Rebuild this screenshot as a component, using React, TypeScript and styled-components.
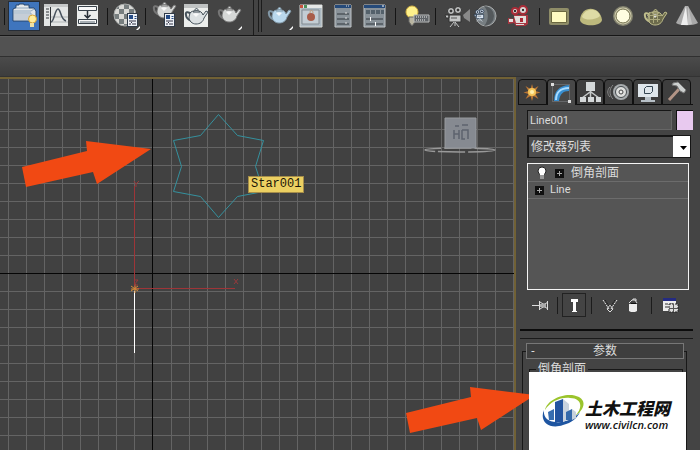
import React from "react";
import styled, { createGlobalStyle } from "styled-components";

const GlobalStyle = createGlobalStyle`
  * { box-sizing: border-box; }
  body { margin: 0; background: #444; }
  button, input, select { font: inherit; color: inherit; margin: 0; padding: 0; border-radius: 0; }
`;

const Page = styled.main`
  display: flex;
  flex-direction: column;
  height: 100vh;
  overflow: hidden;
  background: #444;
  color: #dcdcdc;
  font: 11px/16px Roboto, "Noto Sans CJK SC", sans-serif;
`;

const Toolbar = styled.header`
  display: flex;
  flex: none;
  height: 36px;
  overflow: hidden;
  background: #444;
  border-bottom: 1px solid #161616;
`;

const ToolButton = styled.button`
  flex: none;
  width: 32px;
  height: 35px;
  border: 0;
  background: none;
  svg { display: block; }
`;

const Separator = styled.span<{ $width: number }>`
  display: flex;
  flex: none;
  justify-content: center;
  width: ${(p) => p.$width}px;
  padding: 8px 0 10px;
  &::before { content: ""; width: 1px; background: #151515; }
`;

const Grip = styled.span`
  display: flex;
  flex: none;
  gap: 2px;
  width: 19px;
  padding-left: 9px;
  i { width: 1px; height: 32px; background: #1c1c1c; }
  i:first-child { height: 35px; margin-right: 2px; }
`;

const Ribbon = styled.div`
  flex: none;
  height: 21px;
  background: #525252;
  border-top: 1px solid #5c5c5c;
  border-bottom: 1px solid #303030;
`;

const RibbonFooter = styled.div`
  flex: none;
  height: 20px;
  background: linear-gradient(#4b4b4b, #3d3d3d);
  border-bottom: 1px solid #333;
`;

const Workspace = styled.div`
  position: relative;
  display: flex;
  flex: 1;
  min-height: 0;
`;

const Viewport = styled.section`
  position: relative;
  flex: 1;
  min-width: 0;
  border: solid #716135;
  border-width: 2px 2px 0 0;
  background: #414141;
`;

const Scene = styled.svg`
  display: block;
  width: 100%;
  height: 100%;
`;

const ViewCube = styled.svg`
  position: absolute;
  top: 36px;
  right: 16px;
`;

const ObjectTip = styled.span`
  position: absolute;
  top: 97px;
  left: 248px;
  padding: 0 2px;
  border: 1px solid #a58d4a;
  background: #ecd062;
  color: #1c1608;
  font: 12px/15px "Liberation Mono", monospace;
`;

const Arrow = styled.svg<{ $top: number; $left?: number; $right?: number }>`
  position: absolute;
  z-index: 1;
  top: ${(p) => p.$top}px;
  left: ${(p) => (p.$left === undefined ? "auto" : `${p.$left}px`)};
  right: ${(p) => (p.$right === undefined ? "auto" : `${p.$right}px`)};
`;

const Panel = styled.aside`
  display: flex;
  flex: none;
  flex-direction: column;
  width: 184px;
  padding: 2px 7px 0 2px;
  background: #444;
`;

const Tabs = styled.nav`
  display: flex;
  height: 26px;
  padding-right: 2px;
  border-bottom: 1px solid #101010;
`;

const Tab = styled.button<{ $active?: boolean }>`
  flex: 1;
  height: 26px;
  border: 1px solid #101010;
  border-width: 1px 1px ${(p) => (p.$active ? 0 : 1)}px 1px;
  border-radius: 4px 4px 0 0;
  background: ${(p) => (p.$active ? "#484848" : "#3e3e3e")};
  svg { display: block; margin: 0 auto; }
`;

const PanelBody = styled.div`
  display: flex;
  flex-direction: column;
  gap: 5px;
  padding: 5px 0 0 9px;
`;

const NameRow = styled.div`
  display: flex;
  gap: 4px;
`;

const NameInput = styled.input`
  flex: 1;
  min-width: 0;
  height: 20px;
  padding: 0 2px;
  border: 1px solid #161616;
  border-right-color: #666;
  border-bottom-color: #666;
  background: #555;
`;

const Swatch = styled.button`
  width: 17px;
  height: 20px;
  border: 1px solid #111;
  border-width: 1px 0 0 1px;
  background: #e8c9ef;
`;

const SelectBox = styled.div`
  display: flex;
  position: relative;
  margin-right: 2px;
`;

const ModifierSelect = styled.select`
  flex: 1;
  height: 23px;
  padding: 0 20px 0 2px;
  border: 2px solid #161616;
  border-width: 2px 1px 1px 2px;
  appearance: none;
  background: #4d4d4d;
  font-size: 12px;
`;

const SelectArrow = styled.svg`
  position: absolute;
  top: 1px;
  right: 1px;
  pointer-events: none;
`;

const Stack = styled.ul`
  height: 127px;
  margin: 0 4px 0 0;
  padding: 1px 0 0;
  list-style: none;
  border: 1px solid #f4f4f4;
  background: #555;
`;

const StackItem = styled.li<{ $nested?: boolean }>`
  display: flex;
  align-items: center;
  gap: ${(p) => (p.$nested ? 6 : 7)}px;
  height: 17px;
  padding-left: 7px;
  border-bottom: 1px solid #6c6c6c;
  font-size: ${(p) => (p.$nested ? 11 : 12)}px;
  svg { flex: none; }
`;

const StackTools = styled.div`
  display: flex;
  align-items: center;
  height: 24px;
  margin-top: -2px;
`;

const StackButton = styled.button<{ $width: number; $pressed?: boolean }>`
  width: ${(p) => p.$width}px;
  height: 24px;
  border: 1px solid ${(p) => (p.$pressed ? "#222" : "transparent")};
  background: none;
  svg { display: block; margin: 0 auto; }
`;

const StackSeparator = styled.span<{ $gap: number }>`
  width: 1px;
  height: 17px;
  margin: 0 ${(p) => p.$gap}px;
  background: #1c1c1c;
`;

const PanelDivider = styled.div`
  flex: none;
  height: 10px;
  margin: 12px 0 4px 2px;
  border-top: 2px solid #0c0c0c;
  border-bottom: 1px solid #1a1a1a;
`;

const Rollout = styled.section`
  display: flex;
  flex: 1;
  flex-direction: column;
  margin: 0 6px 0 4px;
`;

const RolloutHeader = styled.button`
  display: grid;
  grid-template-columns: 12px 1fr 12px;
  position: relative;
  z-index: 1;
  flex: none;
  align-items: center;
  height: 16px;
  margin: 0 3px 0 4px;
  border: 1px solid #777;
  background: #3e3e3e;
  font-size: 12px;
  line-height: 14px;
`;

const RolloutBody = styled.div`
  position: relative;
  flex: 1;
  margin-top: -8px;
  padding: 8px 3px 0 6px;
  border: solid #181818;
  border-width: 1px 1px 0 1px;
`;

const Group = styled.fieldset`
  height: 100%;
  margin: 0;
  padding: 0;
  border: 1px solid #181818;
  border-bottom: 0;
  legend {
    margin-left: 6px;
    padding: 0 2px;
    font-size: 12px;
    line-height: 18px;
  }
`;

const Brand = styled.a`
  position: absolute;
  right: 0;
  bottom: 0;
  left: 6px;
  top: 20px;
  z-index: 2;
  display: flex;
  align-items: flex-start;
  padding: 22px 0 0 13px;
  background: #fff;
  color: #111;
  text-decoration: none;
  svg { flex: none; }
`;

const BrandText = styled.span`
  display: flex;
  flex-direction: column;
  padding-top: 5px;
  white-space: nowrap;
`;

const BrandName = styled.strong`
  font: italic 900 17px/18px "Noto Sans CJK SC", sans-serif;
`;

const BrandSite = styled.span`
  font: italic 600 11px/16px "Open Sans", sans-serif;
`;

type Part = { children?: React.ReactNode };

const Glyph = ({ children }: Part) => (
  <svg width="32" height="35" viewBox="0 0 32 35" fill="none" aria-hidden="true">{children}</svg>
);

const Small = ({ children, size = 24 }: Part & { size?: number }) => (
  <svg width={size} height={size} viewBox={`0 0 ${size} ${size}`} fill="none" aria-hidden="true">{children}</svg>
);

const Flyout = () => <path d="M26 30l4-4v2l-2 2z" fill="#fff" />;

const Pot = ({ x = 0, y = 0, fill = "#d5d7d6", line = "#777" }: { x?: number; y?: number; fill?: string; line?: string }) => (
  <g transform={`translate(${x} ${y})`} stroke={line}>
    <path d="M7 7C4 4 1 5 2 8c0 3 3 5 6 6" strokeWidth="2" stroke={line} />
    <path d="M6 6c2-3 10-3 12 0l1 2 3-4 2 1-4 6c-1 4-4 6-8 6s-7-3-7-7z" fill={fill} />
    <path d="M9 5c1-2 6-2 7 0zM11 3c0-2 3-2 3 0" fill={fill} />
    <path d="M9 7c2-1 4-1 6 0l-3 3z" fill="#fff" stroke="none" opacity=".8" />
  </g>
);

const Settings = ({ x, y }: { x: number; y: number }) => (
  <g transform={`translate(${x} ${y})`}>
    <rect x=".5" y=".5" width="10" height="13" fill="#eef2f7" stroke="#303a47" />
    <path d="M2 2h4v4H2zM7.500 3h2v1h-2zM7.500 5h2v1h-2z" fill="#254b85" />
    <path d="M2 8h7M2 11h2m1 0h4M4 9.500h1" stroke="#334" />
  </g>
);

const Camera = ({ x = 0, y = 0, color = "#c4c6c6", line = "#333" }: { x?: number; y?: number; color?: string; line?: string }) => (
  <g transform={`translate(${x} ${y})`} stroke={line}>
    <circle cx="6" cy="5" r="3.500" fill={color} />
    <circle cx="13" cy="4" r="3.500" fill={color} />
    <circle cx="6" cy="5" r="1" fill="#222" />
    <circle cx="13" cy="4" r="1" fill="#222" />
    <path d="M4 9h12v7H4zM0 9h4v3H1z" fill={color} />
    <path d="M9 16l-4 5M10 16l4 5M10 16v4" stroke={color} />
    <path d="M6 12h6" stroke="#555" />
  </g>
);

const SceneLayers = () => (
  <Glyph>
    <path d="M0 1h32v30H0z" fill="#252d38" /><path d="M1 2h30v28H1z" fill="#3f75bd" />
    <path d="M8 8V5h3V4h5v1h5v3h5l2 3v8l-1 2H5V9l2-1z" fill="#e4e8eb" stroke="#26476f" />
    <path d="M8 8h13M6 11h17l3-2M6 13h17v7" stroke="#91a8be" /><path d="M6 14h16v6H6z" fill="#c6ced7" />
    <circle cx="24.500" cy="19" r="4" fill="#ffed9b" stroke="#d6a437" /><path d="M22 23h4v4h-4z" fill="#eee1a4" />
  </Glyph>
);
const CurveEditor = () => (
  <Glyph><path d="M4 4h24v22H4z" fill="#e4e6e5" /><path d="M4 5.500h24" stroke="#c6c8c8" strokeWidth="3" /><path d="M10 17h18M10 22h18" stroke="#b0b5b6" /><path d="M10.500 7v19M6 9h3M6 12h3M6 15h3M6 18h3" stroke="#303438" /><path d="M11 22c3 0 4-13 7-13s2 10 8 12" stroke="#47515c" strokeWidth="1.500" /></Glyph>
);
const Schematic = () => (
  <Glyph><path d="M5 5h21v21H5z" fill="#eceeed" /><path d="M6.500 6.500h18v4h-18zM6.500 19.500h18v4h-18z" stroke="#39424a" fill="#f9f9f9" /><path d="M8 21h15v2H8z" fill="#a9b0b5" /><path d="M15.500 11v6m-3-2l3 3 3-3" stroke="#283038" strokeWidth="1.500" /></Glyph>
);
const Material = () => (
  <Glyph>
    <defs><clipPath id="ball"><circle cx="15" cy="15" r="11" /></clipPath></defs>
    <g clipPath="url(#ball)"><path d="M3 3h25v25H3z" fill="#d9d9d6" />{[0, 1, 2, 3, 4].map((r) => [0, 1, 2].map((c) => <rect key={`${r}${c}`} x={4 + c * 10 + (r % 2) * 5} y={4 + r * 5} width="5" height="5" fill="#777e7f" />))}</g>
    <circle cx="15" cy="15" r="11" stroke="#a5a8a7" /><Settings x={17} y={13} /><Flyout />
  </Glyph>
);
const RenderSetup = () => <Glyph><Pot x={4} y={1} /><Settings x={16} y={13} /></Glyph>;
const FrameWindow = () => <Glyph><path d="M4 4h24v23H4z" fill="#eceeec" /><path d="M4 4h24v4H4z" fill="#bfc2c2" /><Pot x={4} y={7} fill="#dce1e3" line="#45515a" /></Glyph>;
const RenderPot = () => <Glyph><Pot x={5} y={5} /><Flyout /></Glyph>;
const BluePot = () => <Glyph><Pot x={4} y={6} fill="#b9d8ed" line="#8298a7" /><Flyout /></Glyph>;
const RenderedFrame = () => <Glyph><path d="M5 5h22v22H5z" fill="#acb9c2" stroke="#d5d7d4" /><path d="M5 5h22v3H5z" fill="#e5e7e6" /><path d="M5 5h3v3H5z" fill="#c65340" /><path d="M9 5h3v3H9z" fill="#4f915c" /><path d="M7 10h17v14H7z" fill="#c3cdd4" stroke="#838c92" /><circle cx="16" cy="17" r="4" fill="#a85d4a" /><path d="M15 13c0-4 3-3 3 0" stroke="#c69b74" /></Glyph>;
const ListWindow = () => <Glyph><path d="M8 5h16v22H8z" fill="#899299" stroke="#c0c5c8" /><path d="M8 5h16v3H8z" fill="#254a7a" /><path d="M10 14h12M10 19h12M10 24h12" stroke="#30373d" /><path d="M19 6h1m1 0h1M18 13h2M18 18h2M18 23h2" stroke="#ddd" /></Glyph>;
const SliderWindow = () => <Glyph><path d="M5 5h21v22H5z" fill="#899299" stroke="#c0c5c8" /><path d="M5 5h21v3H5z" fill="#254a7a" /><path d="M7 10h4v4H7zm5 0h4v4h-4zm5 0h4v4h-4zm5 0h3v4h-3z" fill="#54616b" /><path d="M7 19h17M7 24h17" stroke="#30373d" /><path d="M11.500 17v4m5 1v4M23 6h2" stroke="#fff" /></Glyph>;
const LightLister = () => <Glyph><circle cx="13" cy="12" r="6" fill="#fff18b" stroke="#d6b447" /><path d="M10 17h6v5l-3 4-3-4z" fill="#b9b5a1" stroke="#666" /><path d="M15 15h15v7H15z" fill="#606468" stroke="#babcbc" /><path d="M17 17h11M17 20h10" stroke="#eee" strokeDasharray="1 1" /></Glyph>;
const MovieCamera = () => <Glyph><Camera x={6} y={6} /><path d="M24 15l7-6v13l-6-4z" fill="#898989" /></Glyph>;
const NightCamera = () => <Glyph><circle cx="15" cy="16" r="10" fill="#777e82" stroke="#a6a9aa" /><path d="M13 6a10 10 0 010 20 15 15 0 000-20" fill="#54595c" /><g transform="translate(3 9) scale(.6)"><Camera color="#d6e2ef" line="#172a42" /></g></Glyph>;
const RedCamera = () => (
  <Glyph>
    <g stroke="#a92c38" strokeWidth="2" fill="#d7d5d3"><circle cx="12" cy="11" r="3" /><circle cx="20" cy="10" r="4" /></g>
    <path d="M19 10h2M11 11h2" stroke="#333" strokeWidth="2" />
    <path d="M11 15h14v9l-3 2h-9l-2-3-6 1v-6l6 1z" fill="#a83741" />
    <path d="M11 16h12v7H13zM6 19h4v3H6z" fill="#e2e0dd" /><path d="M17 18h3v4h-3z" fill="#a92c38" /><path d="M13 24h8v1h-8z" fill="#ddd" />
  </Glyph>
);
const Plane = () => <Glyph><rect x="6" y="8" width="20" height="17" rx="2" fill="#8f8d68" /><path d="M8.500 11.500h15v11h-15z" fill="#fffbc1" stroke="#6b683f" /></Glyph>;
const Dome = () => <Glyph><path d="M5 20C6 5 25 5 27 20c-1 7-21 7-22 0z" fill="#bdb97d" /><path d="M7 17c2-9 16-10 18-1-4 4-14 5-18 1z" fill="#dedba5" /></Glyph>;
const SphereLight = () => <Glyph><circle cx="16" cy="16" r="10" fill="#85846f" /><circle cx="16" cy="16" r="8.500" fill="#d1ceb0" /><circle cx="16" cy="16" r="7" fill="#fffde0" stroke="#6e6b49" /></Glyph>;
const MeshLight = () => <Glyph><Pot x={4} y={8} fill="#6c6b4c" line="#c0be8c" /><path d="M10.500 12v10M14.500 11v12M18.500 12v10M8 15.500h15M9 19.500h12" stroke="#aaa87c" /></Glyph>;
const Cone = () => <Glyph><path d="M14 6h3l10 17c-5 3-18 3-22 0z" fill="#a9a9a9" /><path d="M15 6l2 19h-7z" fill="#eee" /><path d="M17 6l4 18-4 1z" fill="#c4c4c4" /></Glyph>;

type Tool = { name: string; icon: React.ReactNode } | number | "grip";
const tools: Tool[] = [
  8, { name: "Scene layers", icon: <SceneLayers /> }, { name: "Curve editor", icon: <CurveEditor /> }, { name: "Schematic view", icon: <Schematic /> },
  6, { name: "Material editor", icon: <Material /> },
  6, { name: "Render setup", icon: <RenderSetup /> }, { name: "Frame window", icon: <FrameWindow /> }, { name: "Render", icon: <RenderPot /> },
  "grip", { name: "Quick render", icon: <BluePot /> }, { name: "Rendered frame", icon: <RenderedFrame /> }, { name: "Object list", icon: <ListWindow /> }, { name: "Sliders", icon: <SliderWindow /> },
  8, { name: "Light lister", icon: <LightLister /> },
  8, { name: "Camera", icon: <MovieCamera /> }, { name: "Night camera", icon: <NightCamera /> }, { name: "Physical camera", icon: <RedCamera /> },
  8, { name: "Plane light", icon: <Plane /> }, { name: "Dome light", icon: <Dome /> }, { name: "Sphere light", icon: <SphereLight /> }, { name: "Mesh light", icon: <MeshLight /> }, { name: "Spot light", icon: <Cone /> },
];

const tabs = [
  { name: "Create", icon: <Small><path d="M12 4l1.500 5 5-3-3 5 5 1.500-5 1.500 3 5-5-3-1.500 5-1.500-5-5 3 3-5-5-1.500 5-1.500-3-5 5 3z" fill="#b87636" /><circle cx="12" cy="12" r="4" fill="#f5c65a" /><circle cx="12" cy="12" r="2" fill="#fff0ae" /></Small> },
  { name: "Modify", icon: <Small><path d="M5 20C5 10 10 5 20 4v6c-6 0-9 3-10 10z" fill="#388ed0" /><path d="M7 19C7 12 11 7 20 7" stroke="#a9dcff" strokeWidth="2" /><path d="M3.500 3.500h17v17h-17z" stroke="#85898c" strokeDasharray="1 1" /><path d="M2 2h3v3H2zm17 17h3v3h-3z" fill="#ddd" /></Small> },
  { name: "Hierarchy", icon: <Small><path d="M8 2h9v9H8z" fill="#d5d9da" /><path d="M12.500 11v6M12 12l-8 6M13 12l8 6" stroke="#c6caca" strokeWidth="1.500" /><path d="M2 17h6v5H2zm8 0h6v5h-6zm8 0h5v5h-5z" fill="#d5d9da" /></Small> },
  { name: "Motion", icon: <Small><path d="M6 5c-4 4-4 10 0 14M3 7c-3 3-3 7 0 10" stroke="#888" /><circle cx="14" cy="12" r="8" fill="#a7abad" /><circle cx="14" cy="12" r="5.500" fill="#dedfdd" stroke="#464b4e" /><circle cx="14" cy="12" r="2" fill="#efefed" stroke="#444" /></Small> },
  { name: "Display", icon: <Small><path d="M2 4h20v13H2z" fill="#dfe6eb" /><path d="M9 17h6v3h4v2H5v-2h4z" fill="#b7c0c7" /><path d="M8.500 8.500l2-2h6v5l-2 2h-6z" stroke="#344551" /></Small> },
  { name: "Utilities", icon: <Small><path d="M4 20L15 8" stroke="#b29486" strokeWidth="3" /><path d="M8 3l5-1 8 8-2 3-4-2-3-5-5-1z" fill="#cdd0cf" stroke="#777" /></Small> },
];

const Expand = () => <svg width="9" height="9" viewBox="0 0 9 9" aria-hidden="true"><path d="M0 0h9v9H0z" fill="#101010" /><path d="M2 4.500h5M4.500 2v5" stroke="#aaa" /></svg>;

const PointerArrow = ({ label, ...place }: { label: string; $top: number; $left?: number; $right?: number }) => (
  <Arrow width="130" height="48" viewBox="0 0 130 48" aria-label={label} {...place}>
    <path d="M1 27L66 11 65 1l65 8-54 35-4-12L5 47z" fill="#f14913" />
  </Arrow>
);

const columns = [8, 26, 44, 62, 80, 98, 116, 134, ...Array.from({ length: 80 }, (_, i) => 171 + i * 18)];
const rows = Array.from({ length: 60 }, (_, i) => 14 + i * 18).filter((y) => y !== 194);

export default function App() {
  return (
    <Page>
      <GlobalStyle />
      <Toolbar>
        {tools.map((tool, i) => {
          if (tool === "grip") return <Grip key={i}><i /><i /><i /></Grip>;
          if (typeof tool === "number") return <Separator key={i} $width={tool} />;
          return <ToolButton key={i} aria-label={tool.name}>{tool.icon}</ToolButton>;
        })}
      </Toolbar>
      <Ribbon />
      <RibbonFooter />
      <Workspace>
        <Viewport>
          <Scene aria-label="Viewport">
            <g fill="#646464">
              {columns.map((x) => <rect key={x} x={x} y="0" width="1" height="100%" />)}
              {rows.map((y) => <rect key={y} x="0" y={y} width="100%" height="1" />)}
            </g>
            <path d="M0 194.500h3000M152.500 0v3000" stroke="#050505" />
            <path d="M218.500 35.500l19 21 26 5-8 26 8 25-26 5-19 21-18-21-27-5 8-25-8-26 27-5z" fill="none" stroke="#35919e" />
            <path d="M134.500 209V107M135 209.500h100" stroke="#9e3538" />
            <path d="M134.500 212v62" stroke="#fff" />
            <path d="M131 207l7 5m-7 0l7-5m-3-2v9m-4-4h8" stroke="#d38a38" />
            <g fill="none" stroke="#963a3c"><path d="M134 102l2 3 3-3m-3 3v3M234 200l4 5m0-5l-4 5M134 201h4l-4 5h4" /></g>
          </Scene>
          <ObjectTip>Star001</ObjectTip>
          <ViewCube width="76" height="44" viewBox="0 0 76 44" aria-label="View cube">
            <ellipse cx="38" cy="35" rx="35" ry="2" fill="none" stroke="#999" strokeWidth="1.500" strokeDasharray="27 3" />
            <path d="M23 3h31v30H23z" fill="#868a91" />
            <path d="M23 3h31v30H23z" fill="none" stroke="#979a9e" />
            <g fill="none" stroke="#5d636e"><path d="M32 15v9m5-9v9m-5-5h5M40 15h6v9m-6-9v9h3M33 11h4m3-1h6" strokeWidth="1.500" /></g>
          </ViewCube>
          <PointerArrow label="Star shape" $top={61} $left={21} />
        </Viewport>
        <PointerArrow label="Parameters" $top={309} $right={165} />
        <Panel>
          <Tabs>
            {tabs.map((tab) => <Tab key={tab.name} aria-label={tab.name} $active={tab.name === "Modify"}>{tab.icon}</Tab>)}
          </Tabs>
          <PanelBody>
            <NameRow>
              <NameInput aria-label="Object name" defaultValue="Line001" />
              <Swatch aria-label="Object colour" />
            </NameRow>
            <SelectBox>
              <ModifierSelect aria-label="修改器列表"><option>修改器列表</option></ModifierSelect>
              <SelectArrow width="17" height="21" viewBox="0 0 17 21" aria-hidden="true"><path d="M0 0h17v21H0z" fill="#fff" /><path d="M7 10h7l-3.500 4z" fill="#000" /></SelectArrow>
            </SelectBox>
            <Stack>
              <StackItem>
                <svg width="13" height="14" viewBox="0 0 13 14" aria-hidden="true"><circle cx="7" cy="5" r="4" fill="#fff" stroke="#222" /><path d="M5 8h4v5H5z" fill="#fff" /><path d="M5 10h4M5 12h4" stroke="#333" /></svg>
                <Expand />倒角剖面
              </StackItem>
              <StackItem $nested><Expand />Line</StackItem>
            </Stack>
            <StackTools>
              <StackButton $width={26} aria-label="Pin stack"><Small size={18}><path d="M1 9.500h8M8.500 5v9M16.500 5v9M9 6l3 2h2l3-2M9 13l3-2h2l3 2" stroke="#ddd" /><path d="M9 8h6v3H9z" fill="#aaa" /></Small></StackButton>
              <StackSeparator $gap={4} />
              <StackButton $width={24} $pressed aria-label="Show end result"><Small size={18}><path d="M6 3h7v3h-2v9h1v1H7v-1h1V6H6z" fill="#fff" /></Small></StackButton>
              <StackSeparator $gap={5} />
              <StackButton $width={26} aria-label="Make unique"><Small size={18}><path d="M2 4l6 9M16 4l-6 9" stroke="#eee" strokeDasharray="2 1" /><path d="M9 9l3 4-3 3-3-3z" stroke="#ddd" /><path d="M4 4l4 6m6-6l-4 6" stroke="#111" strokeDasharray="1 1" /></Small></StackButton>
              <StackButton $width={20} aria-label="Remove modifier"><Small size={18}><path d="M5 8h8v7l-2 1H7l-2-1z" fill="#eee" /><path d="M5 7l3-3h3l2 3M9 4V3h3v2" stroke="#ddd" /><path d="M7 7.500h5" stroke="#111" /></Small></StackButton>
              <StackSeparator $gap={8} />
              <StackButton $width={18} aria-label="Configure modifier sets"><Small size={18}><path d="M2 2h13v13H2z" fill="#ececec" /><path d="M2 2h13v3H2z" fill="#242b82" /><path d="M4 8h3m2 0h3M4 11h3" stroke="#333" /><path d="M8 8h9v8H8z" fill="#ddd" stroke="#222" strokeDasharray="2 1" /><path d="M12.500 8v8M8 12.500h9" stroke="#555" /></Small></StackButton>
            </StackTools>
          </PanelBody>
          <PanelDivider />
          <Rollout>
            <RolloutHeader><span>-</span><span>参数</span></RolloutHeader>
            <RolloutBody>
              <Group><legend>倒角剖面</legend></Group>
              <Brand href="#civilcn" aria-label="土木工程网 www.civilcn.com">
                <svg width="43" height="36" viewBox="0 0 43 36" aria-hidden="true">
                  <path d="M3 16C5 5 25-3 37 3c9 5 3 15-4 19C42 13 39 4 28 4 18 3 8 8 3 16z" fill="#9bc42c" />
                  <path d="M2 16C-3 27 7 36 21 31c9-2 14-7 17-13-7 8-17 11-24 10C6 28 1 23 2 16z" fill="#1e55a1" />
                  <path d="M6 18l6-3v11H7z" fill="#376db0" /><path d="M13 8l8-3v23h-8z" fill="#2354a0" /><path d="M21 5l6 5v15l-6 3z" fill="#c9d3df" /><path d="M24 18l6-3v11h-6z" fill="#3469ab" /><path d="M30 15l4 3v6l-4 2z" fill="#c7d1dc" />
                </svg>
                <BrandText><BrandName>土木工程网</BrandName><BrandSite>www.civilcn.com</BrandSite></BrandText>
              </Brand>
            </RolloutBody>
          </Rollout>
        </Panel>
      </Workspace>
    </Page>
  );
}
